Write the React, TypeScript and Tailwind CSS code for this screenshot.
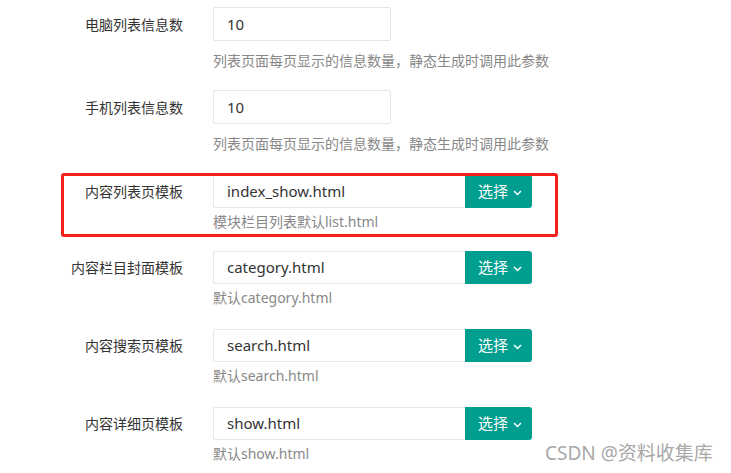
import React from "react";

const font = { fontFamily: '"Microsoft YaHei", "Noto Sans", "Noto Sans CJK SC", sans-serif' };

function Chevron() {
  return (
    <svg width="9" height="6" viewBox="0 0 9 6" className="ml-[5px] mt-[2px]">
      <path d="M1 1 L4.5 4.5 L8 1" fill="none" stroke="white" strokeWidth="1.5" />
    </svg>
  );
}

function NumRow({ label, value, help, mb }: { label: string; value: string; help: string; mb: string }) {
  return (
    <div className={mb}>
      <div className="flex items-center">
        <div className="w-[183px] text-right text-[14px] text-[#333]">{label}</div>
        <div className="ml-[30px] w-[178px] h-[34px] border border-[#e6e6e6] rounded-[2px] flex items-center pl-[13px] text-[15px] text-[#333]">
          {value}
        </div>
      </div>
      <div className="ml-[213px] mt-[10px] leading-[20px] text-[14px] text-[#888]">{help}</div>
    </div>
  );
}

function TplRow({ label, value, help, highlight, mb }: { label: string; value: string; help: string; highlight?: boolean; mb: string }) {
  return (
    <div className={`relative ${mb}`}>
      {highlight && (
        <div className="absolute left-[61px] top-[-2px] w-[497px] h-[64px] border-[3px] border-[#f5201c] rounded-[3px]" />
      )}
      <div className="flex items-center">
        <div className="w-[183px] text-right text-[14px] text-[#333]">{label}</div>
        <div className="ml-[30px] flex h-[33px]">
          <div className="w-[252px] h-full border border-[#e6e6e6] border-r-0 rounded-l-[2px] flex items-center pl-[13px] text-[15px] text-[#333]">
            {value}
          </div>
          <div className="w-[67px] h-full bg-[#009e8f] rounded-r-[3px] flex items-center pl-[13px] text-[15px] text-white">
            选择
            <Chevron />
          </div>
        </div>
      </div>
      <div className="ml-[213px] mt-[4px] leading-[20px] text-[14px] text-[#888]">{help}</div>
    </div>
  );
}

export default function App() {
  const help = "列表页面每页显示的信息数量，静态生成时调用此参数";
  return (
    <div className="relative w-[731px] h-[473px] bg-white overflow-hidden pt-[7px]" style={font}>
      <NumRow label="电脑列表信息数" value="10" help={help} mb="mb-[19px]" />
      <NumRow label="手机列表信息数" value="10" help={help} mb="mb-[21px]" />
      <TplRow label="内容列表页模板" value="index_show.html" help="模块栏目列表默认list.html" highlight mb="mb-[19px]" />
      <TplRow label="内容栏目封面模板" value="category.html" help="默认category.html" mb="mb-[21px]" />
      <TplRow label="内容搜索页模板" value="search.html" help="默认search.html" mb="mb-[21px]" />
      <TplRow label="内容详细页模板" value="show.html" help="默认show.html" mb="mb-[21px]" />
      <div className="absolute left-[545px] top-[441px] text-[19px] leading-[24px] text-[#a8a8a8] whitespace-nowrap">
        CSDN @资料收集库
      </div>
    </div>
  );
}
